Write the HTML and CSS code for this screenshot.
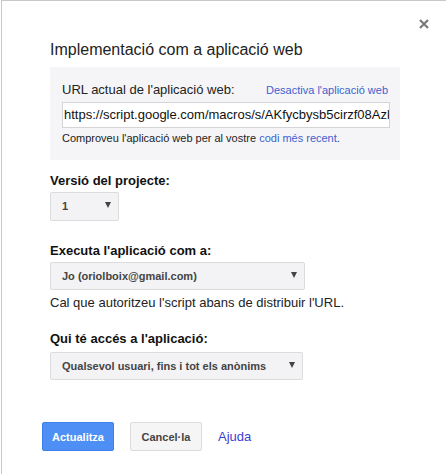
FILE: index.html
```html
<!DOCTYPE html>
<html lang="ca">
<head>
<meta charset="utf-8">
<title>Implementació com a aplicació web</title>
<link rel="stylesheet" href="styles.css">
</head>
<body>
<div class="dialog">
  <button class="close" aria-label="Tanca">
    <svg width="10" height="10" viewBox="0 0 10 10"><path d="M1 1L9 9M9 1L1 9" stroke="#7a7a7a" stroke-width="2.2" fill="none"/></svg>
  </button>
  <div class="content">
    <h1 class="title">Implementació com a aplicació web</h1>
    <div class="panel">
      <div class="url-row">
        <span class="url-label">URL actual de l'aplicació web:</span>
        <a class="link small" href="#">Desactiva l'aplicació web</a>
      </div>
      <div class="url-input">https://script.google.com/macros/s/AKfycbysb5cirzf08Azkxq3Tz7bYw/exec</div>
      <div class="hint">Comproveu l'aplicació web per al vostre <a class="link" href="#">codi més recent</a>.</div>
    </div>

    <div class="label first">Versió del projecte:</div>
    <div class="select sel-version"><span>1</span><i class="arrow"></i></div>

    <div class="label">Executa l'aplicació com a:</div>
    <div class="select sel-wide"><span>Jo (oriolboix@gmail.com)</span><i class="arrow"></i></div>
    <div class="note">Cal que autoritzeu l'script abans de distribuir l'URL.</div>

    <div class="label third">Qui té accés a l'aplicació:</div>
    <div class="select sel-access"><span>Qualsevol usuari, fins i tot els anònims</span><i class="arrow"></i></div>
  </div>
  <div class="buttons">
    <button class="btn primary">Actualitza</button>
    <button class="btn">Cancel·la</button>
    <a class="help" href="#">Ajuda</a>
  </div>
</div>
</body>
</html>
```

FILE: styles.css
```css
html, body {
  margin: 0;
  padding: 0;
  background: #fff;
}
body {
  font-family: "Liberation Sans", Arial, sans-serif;
  color: #222;
  width: 446px;
  height: 474px;
  overflow: hidden;
}
.dialog {
  position: relative;
  box-sizing: border-box;
  height: 474px;
  margin-left: 1px;
  border-top: 1px solid #c8c8c8;
  border-left: 1px solid #c8c8c8;
}
.close {
  position: absolute;
  top: 18px;
  left: 417px;
  width: 10px;
  height: 10px;
  padding: 0;
  border: 0;
  background: none;
  line-height: 0;
}
.content {
  padding-left: 48px;
  padding-top: 39px;
}
.title {
  margin: 0;
  font-size: 16px;
  line-height: 20px;
  font-weight: normal;
  color: #222;
}
.panel {
  margin-top: 7px;
  width: 350px;
  box-sizing: border-box;
  padding: 15px 10px 15px 12px;
  background: #f5f5f7;
}
.url-row {
  display: flex;
  justify-content: space-between;
  align-items: baseline;
  line-height: 16px;
}
.url-label {
  font-size: 13px;
  color: #222;
}
.link {
  color: #3d5fcf;
  text-decoration: none;
}
.small {
  font-size: 11px;
  margin-right: 2px;
}
.url-input {
  margin-top: 4px;
  height: 26px;
  box-sizing: border-box;
  border: 1px solid #d4d4d4;
  background: #fff;
  font-size: 13px;
  line-height: 24px;
  padding-left: 1px;
  white-space: nowrap;
  overflow: hidden;
  color: #111;
}
.hint {
  margin-top: 3px;
  font-size: 11px;
  line-height: 14px;
  color: #222;
}
.label {
  font-size: 13px;
  font-weight: bold;
  line-height: 16px;
  color: #111;
  margin-top: 22px;
}
.label.first {
  margin-top: 13px;
}
.label.third {
  margin-top: 20px;
}
.select {
  position: relative;
  margin-top: 3px;
  box-sizing: border-box;
  height: 29px;
  border: 1px solid #dcdcdc;
  border-radius: 2px;
  background: #f3f3f5;
  font-size: 11px;
  font-weight: bold;
  color: #444;
  line-height: 27px;
  padding-left: 11px;
}
.sel-version { width: 69px; }
.sel-wide { width: 255px; height: 28px; line-height: 26px; }
.sel-access { width: 253px; height: 28px; line-height: 26px; margin-top: 5px; }
.arrow {
  position: absolute;
  right: 7px;
  top: 9px;
  width: 0;
  height: 0;
  border-left: 3px solid transparent;
  border-right: 3px solid transparent;
  border-top: 6px solid #444;
}
.note {
  margin-top: 5px;
  font-size: 13px;
  line-height: 16px;
  color: #222;
}
.buttons {
  display: flex;
  align-items: center;
  gap: 16px;
  margin-top: 42px;
  padding-left: 40px;
}
.btn {
  height: 29px;
  width: 72px;
  box-sizing: border-box;
  border: 1px solid #dcdcdc;
  border-radius: 2px;
  background: #f5f5f5;
  font-family: "Liberation Sans", Arial, sans-serif;
  font-size: 11px;
  font-weight: bold;
  color: #444;
  padding: 0;
}
.btn.primary {
  background: #4d8ff5;
  border-color: #3f7ee8;
  color: #fff;
}
.help {
  font-size: 13px;
  color: #3b3fd0;
  text-decoration: none;
}
```
